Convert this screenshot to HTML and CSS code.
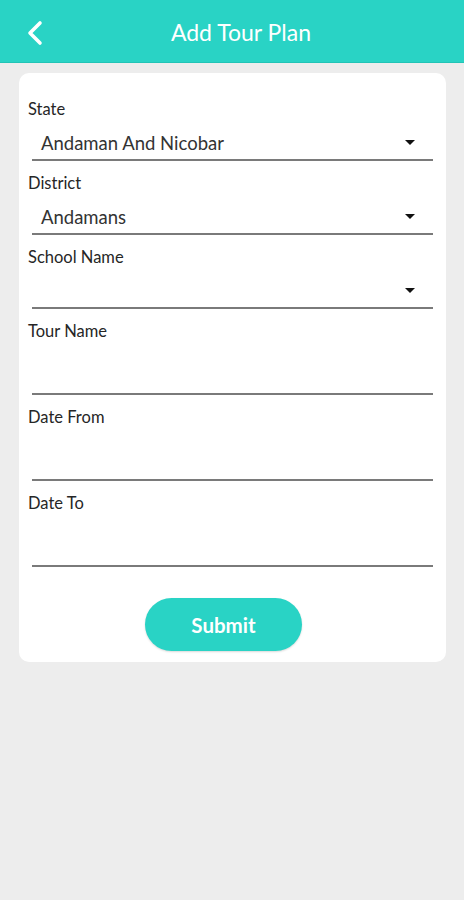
FILE: index.html
```html
<!DOCTYPE html>
<html>

<head>
    <link rel="stylesheet" href="styles.css">
</head>

<body>
    <div class="topbar">
        <span class="back">
            <svg width="20" height="26" viewBox="0 0 20 26">
                <path d="M15 3 L5 13 L15 23" fill="none" stroke="#fff" stroke-width="3.6" stroke-linecap="round" stroke-linejoin="round"/>
            </svg>
        </span>
        <h1 class="title">Add Tour Plan</h1>
    </div>

    <div class="card">
        <div class="field">
            <label class="label">State</label>
            <div class="control select">
                <span class="value">Andaman And Nicobar</span>
                <span class="caret"></span>
            </div>
        </div>
        <div class="field">
            <label class="label">District</label>
            <div class="control select">
                <span class="value">Andamans</span>
                <span class="caret"></span>
            </div>
        </div>
        <div class="field">
            <label class="label">School Name</label>
            <div class="control select">
                <span class="value"></span>
                <span class="caret"></span>
            </div>
        </div>
        <div class="field">
            <label class="label">Tour Name</label>
            <div class="control text"></div>
        </div>
        <div class="field">
            <label class="label">Date From</label>
            <div class="control text"></div>
        </div>
        <div class="field">
            <label class="label">Date To</label>
            <div class="control text"></div>
        </div>
        <div class="actions">
            <button class="submit">Submit</button>
        </div>
    </div>
</body>

</html>
```

FILE: styles.css
```css
* {
    box-sizing: border-box;
}

body {
    margin: 0;
    background-color: #ededed;
    font-family: Lato, "Open Sans", sans-serif;
    height: 900px;
}

.topbar {
    height: 63px;
    background-color: #29d3c5;
    border-bottom: 1px solid #22c4b6;
    display: flex;
    align-items: center;
    position: relative;
}

.back {
    position: absolute;
    left: 25px;
    top: 20px;
    display: flex;
}

.title {
    flex: 1;
    margin: 0;
    padding-top: 2px;
    text-align: center;
    color: #fff;
    font-size: 23px;
    font-weight: 400;
    padding-left: 18px;
}

.card {
    margin: 10px 18px 0 19px;
    background-color: #fff;
    border-radius: 10px;
    padding: 25px 13px 11px 9px;
}

.field {
    margin-bottom: 11px;
}

.label {
    display: block;
    height: 20px;
    line-height: 22px;
    font-size: 16.5px;
    color: #262626;
}

.control {
    margin-left: 4px;
    border-bottom: 2px solid #7a7a7a;
    display: flex;
    align-items: flex-end;
}

.select {
    height: 43px;
    padding: 0 18px 5px 9px;
    justify-content: space-between;
}

.text {
    height: 55px;
}

.value {
    font-size: 18.5px;
    line-height: 22px;
    color: #333;
}

.caret {
    width: 0;
    height: 0;
    border-left: 5px solid transparent;
    border-right: 5px solid transparent;
    border-top: 5px solid #111;
    margin-bottom: 9px;
}

.actions {
    display: flex;
    justify-content: center;
    padding-top: 20px;
    padding-right: 14px;
}

.submit {
    width: 157px;
    height: 53px;
    border: none;
    border-radius: 27px;
    background-color: #29d3c5;
    color: #fff;
    font-family: Lato, sans-serif;
    font-size: 20.5px;
    font-weight: 700;
    box-shadow: 0 1px 2px rgba(0, 0, 0, 0.15);
}
```
